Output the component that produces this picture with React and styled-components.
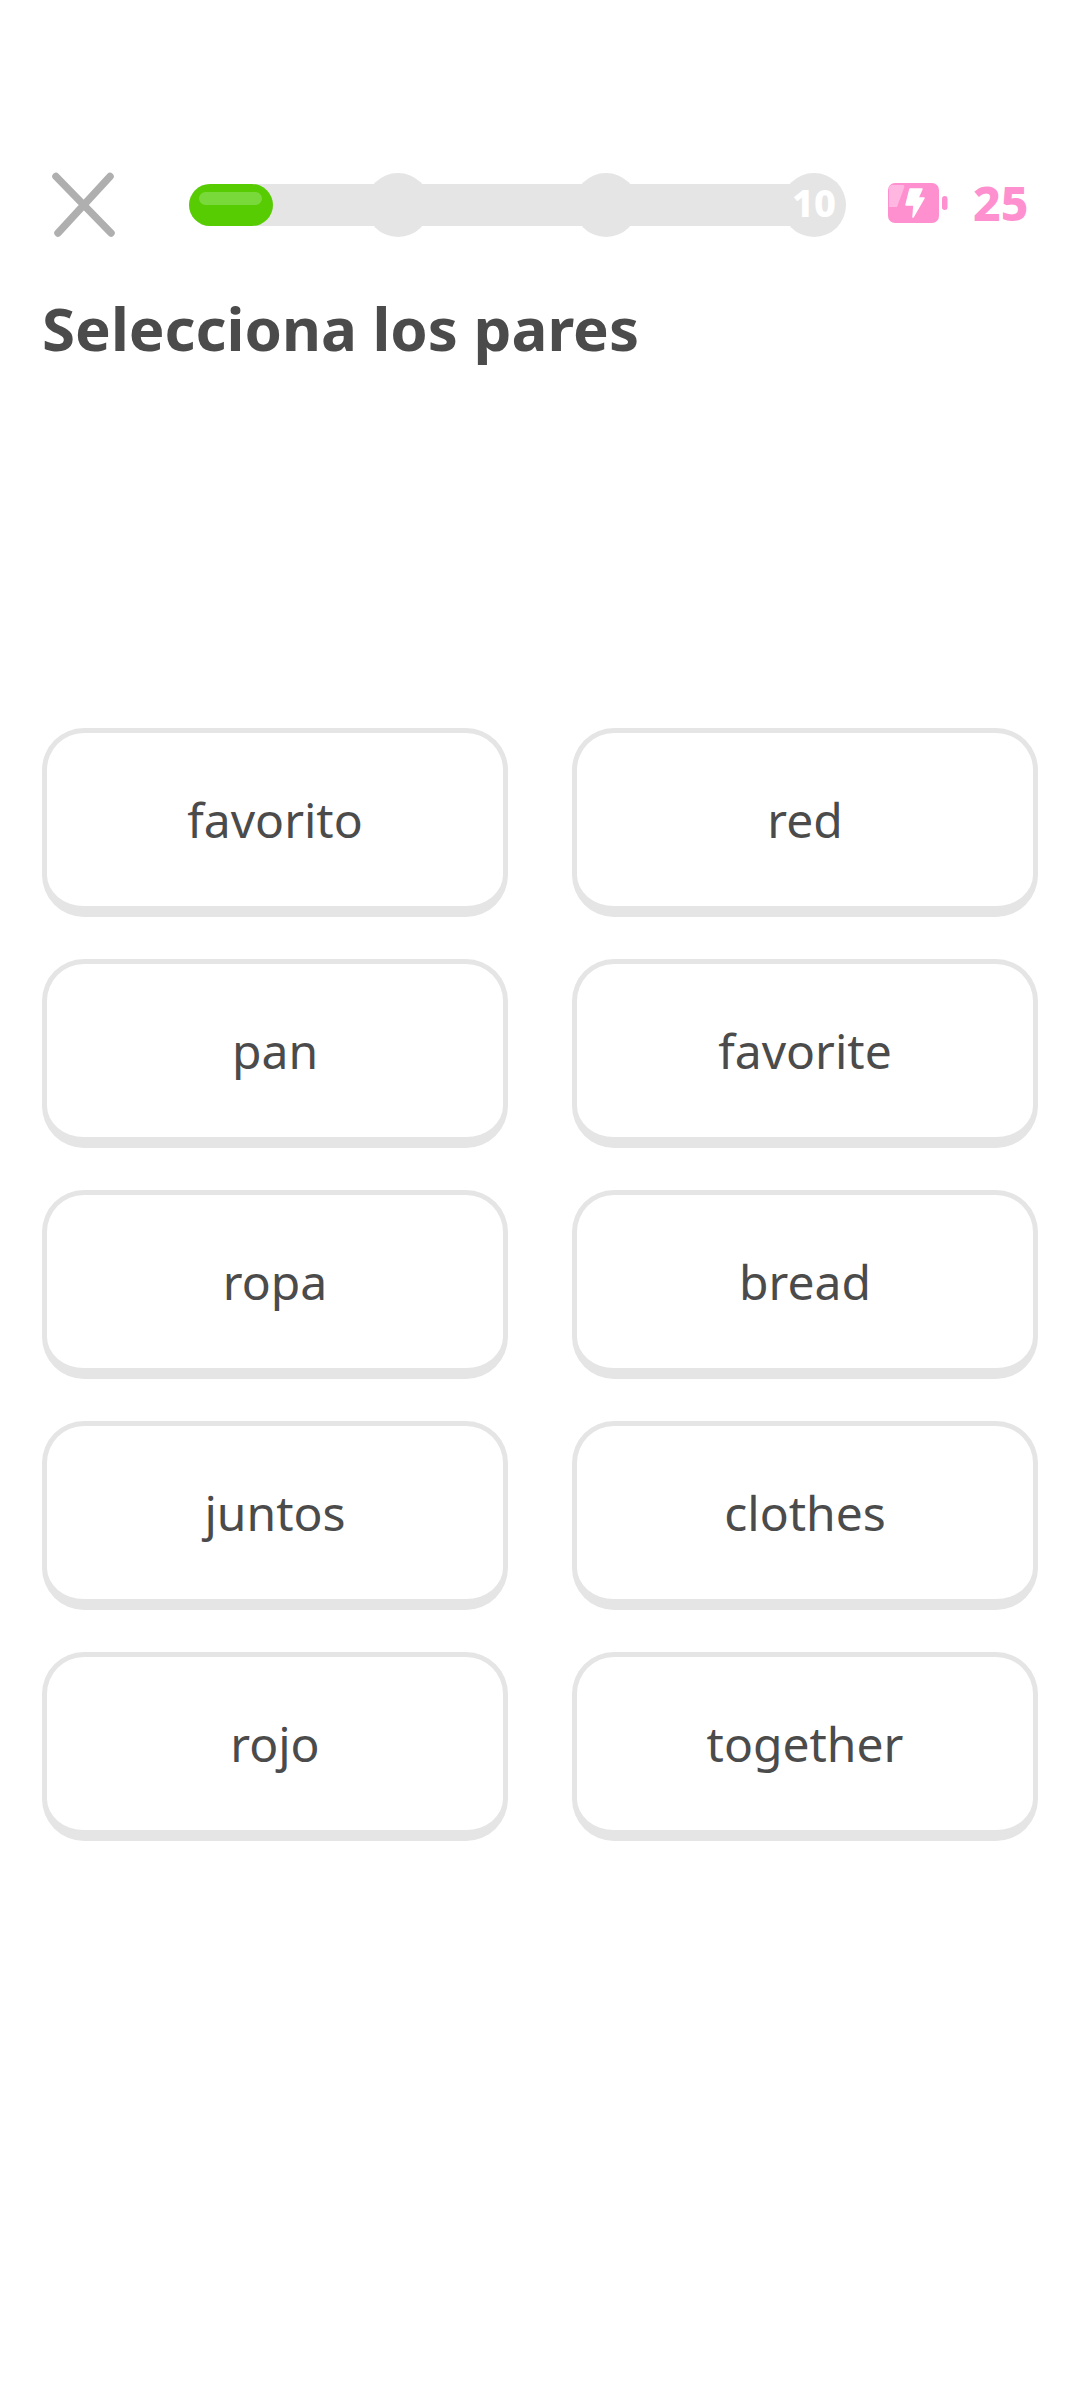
import React from "react";
import styled, { createGlobalStyle } from "styled-components";

const Global = createGlobalStyle`
  html, body { margin: 0; padding: 0; background: #fff; }
  body { font-family: "Noto Sans", "Liberation Sans", sans-serif; color: #4b4b4b; }
`;
const Page = styled.main`
  width: 1080px; height: 2400px; box-sizing: border-box; padding: 172px 42px 0; background: #fff;
`;
const Header = styled.header`
  display: flex; align-items: center; height: 66px;
`;
const CloseButton = styled.div`
  width: 84px; height: 66px; margin-left: 7px; margin-right: 1px; flex: none; display: flex; align-items: center;
`;
const Track = styled.div`
  position: relative; margin-left: 55px; width: 625px; height: 42px; border-radius: 21px 0 0 21px; background: #e5e5e5; flex: none;
`;
const Fill = styled.div`
  width: 84px; height: 42px; border-radius: 21px; background: #58cc02; position: relative;
  &::after { content: ""; position: absolute; left: 10px; top: 8px; width: 63px; height: 13px; border-radius: 7px; background: #79d93a; }
`;
const Checkpoint = styled.div`
  position: absolute; top: -11px; width: 64px; height: 64px; border-radius: 50%; background: #e5e5e5;
  display: flex; align-items: center; justify-content: center; padding-bottom: 6px; box-sizing: border-box;
  color: #fff; font-size: 38px; font-weight: 800;
  left: ${p => p.$left}px;
`;
const Energy = styled.div`
  display: flex; align-items: center; margin-left: 74px; margin-top: -4px; flex: none;
`;
const EnergyCount = styled.span`
  margin-left: 25px; color: #ff90d0; font-size: 48px; font-weight: 800; line-height: 66px;
`;
const Title = styled.h1`
  margin: 48px 0 0; font-size: 60px; line-height: 84px; font-weight: 700; color: #4b4b4b;
`;
const Grid = styled.div`
  margin-top: 358px; display: grid; grid-template-columns: repeat(2, 466px); column-gap: 64px; row-gap: 42px;
`;
const Card = styled.button`
  box-sizing: border-box; height: 189px; border: 5px solid #e5e5e5; border-bottom-width: 11px; border-radius: 42px;
  background: #fff; color: #4b4b4b; font-family: inherit; font-size: 48px; font-weight: 400; padding: 0;
  display: flex; align-items: center; justify-content: center;
`;

const words = ["favorito","red","pan","favorite","ropa","bread","juntos","clothes","rojo","together"];

export default function App() {
  return (
    <Page>
      <Global />
      <Header>
        <CloseButton>
          <svg width="66" height="66" viewBox="0 0 66 66" fill="none" stroke="#afafaf" strokeWidth="7.500" strokeLinecap="round">
            <path d="M7 4.500 L62 61 M61 4.500 L9 61" />
          </svg>
        </CloseButton>
        <Track>
          <Fill />
          <Checkpoint $left={177} />
          <Checkpoint $left={385} />
          <Checkpoint $left={593}>10</Checkpoint>
        </Track>
        <Energy>
          <svg width="60" height="40" viewBox="0 0 60 40">
            <rect x="0" y="0" width="51" height="40" rx="7" fill="#ff90d0" />
            <path d="M4 2 H15 Q17 2 16 5 L9 24 H1 V5 Q1 2 4 2 Z" fill="#ffb6e0" />
            <path d="M22 6 H34 L30 15 H36 L25 34 L26 22 H18 Z" fill="#fff" stroke="#fff" strokeWidth="1.500" strokeLinejoin="round" />
            <rect x="54" y="13" width="5.500" height="14" rx="2.700" fill="#ff90d0" />
          </svg>
          <EnergyCount>25</EnergyCount>
        </Energy>
      </Header>
      <Title>Selecciona los pares</Title>
      <Grid>
        {words.map(w => <Card key={w}>{w}</Card>)}
      </Grid>
    </Page>
  );
}
